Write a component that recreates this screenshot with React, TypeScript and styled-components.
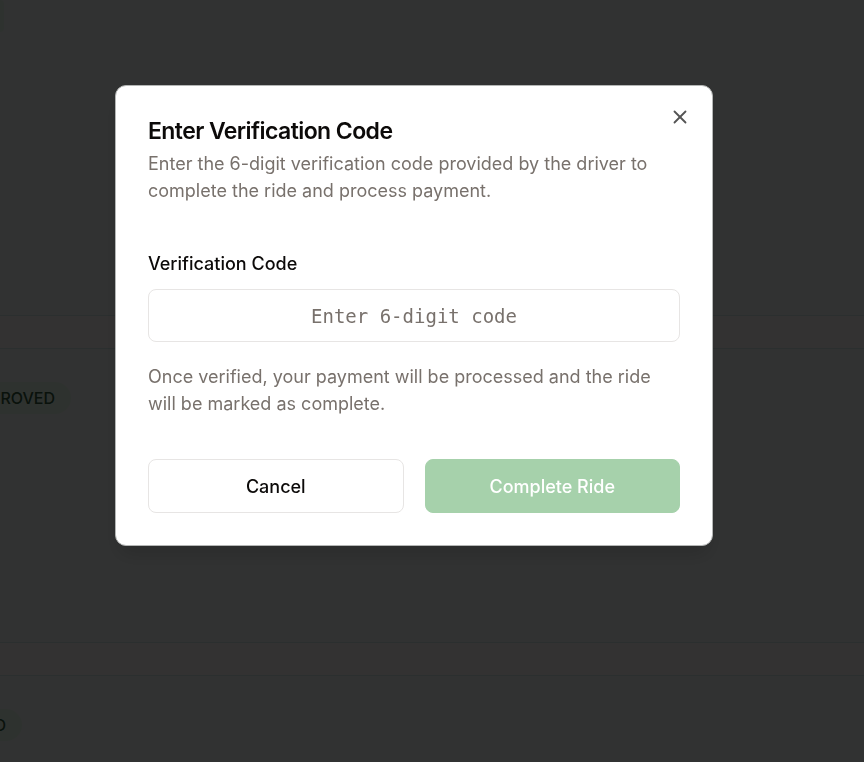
import React from "react";
import styled, { createGlobalStyle } from "styled-components";
import { X } from "lucide-react";

const GlobalStyle = createGlobalStyle`
  * { box-sizing: border-box; }
  body { margin: 0; background: #fffafa; font-family: Inter, "Noto Sans", sans-serif; }
  button, input { font: inherit; }
`;

const Page = styled.div`
  height: 100vh;
  overflow: hidden;
`;

const RideList = styled.main`
  display: flex;
  flex-direction: column;
  gap: 32px;
`;

const RideCard = styled.section<{ $height: number }>`
  flex: none;
  height: ${(p) => p.$height}px;
  padding-top: 33px;
  background: #f5faf7;
  border: solid #d7ebeb;
  border-width: 1px 0;
  &:first-child { padding-top: 0; border-top: 0; }
`;

const Status = styled.span<{ $width: number }>`
  display: flex;
  align-items: center;
  justify-content: flex-end;
  width: ${(p) => p.$width}px;
  height: 32px;
  padding-right: ${(p) => Math.min(16, p.$width)}px;
  overflow: hidden;
  border-radius: 0 16px 16px 0;
  background: #e6f7eb;
  color: #325a3c;
  font-size: 16px;
  font-weight: 500;
`;

const Overlay = styled.div`
  position: fixed;
  inset: 0;
  display: flex;
  align-items: flex-start;
  justify-content: center;
  padding: 85px 36px 0 0;
  background: rgba(0, 0, 0, 0.8);
`;

const Dialog = styled.form`
  position: relative;
  width: 100%;
  max-width: 598px;
  padding: 32px;
  border: 1px solid #b4b6b5;
  border-radius: 11px;
  background: #fff;
  box-shadow: 0 12px 20px -4px rgba(0, 0, 0, 0.15);
`;

const Close = styled.button`
  position: absolute;
  top: 20px;
  right: 21px;
  display: flex;
  padding: 0;
  border: 0;
  background: none;
  color: #545454;
`;

const Title = styled.h2`
  margin: 0 0 5px;
  color: #0c0a09;
  font-size: 23px;
  font-weight: 600;
  line-height: 27px;
  letter-spacing: -0.025em;
`;

const Text = styled.p`
  margin: 0;
  color: #78716c;
  font-size: 18px;
  line-height: 27px;
`;

const Field = styled.div`
  display: flex;
  flex-direction: column;
  gap: 12px;
  margin: 46px 0 21px;
`;

const Label = styled.label`
  color: #0c0a09;
  font-size: 18px;
  font-weight: 500;
  line-height: 27px;
`;

const CodeInput = styled.input`
  width: 100%;
  height: 53px;
  padding: 0 16px;
  border: 1px solid #e7e5e4;
  border-radius: 8px;
  background: #fff;
  font-family: "DejaVu Sans Mono", monospace;
  font-size: 19px;
  text-align: center;
  &::placeholder { color: #78716c; opacity: 1; }
`;

const Actions = styled.div`
  display: grid;
  grid-template-columns: 1fr 1fr;
  gap: 21px;
  margin-top: 42px;
`;

const Button = styled.button<{ $primary?: boolean }>`
  height: 54px;
  padding: 0 16px;
  border: 1px solid ${(p) => (p.$primary ? "#a6d1ab" : "#e7e5e4")};
  border-radius: 8px;
  background: ${(p) => (p.$primary ? "#a6d1ab" : "#fff")};
  color: ${(p) => (p.$primary ? "#fff" : "#0c0a09")};
  font-size: 18px;
  font-weight: 500;
`;

export default function App() {
  return (
    <>
      <GlobalStyle />
      <Page>
        <RideList>
          <RideCard $height={316}>
            <Status $width={4} />
          </RideCard>
          <RideCard $height={295}>
            <Status $width={71}>ROVED</Status>
          </RideCard>
          <RideCard $height={295}>
            <Status $width={22}>D</Status>
          </RideCard>
        </RideList>
      </Page>
      <Overlay>
        <Dialog role="dialog" aria-modal="true" aria-labelledby="dialog-title" onSubmit={(e) => e.preventDefault()}>
          <Title id="dialog-title">Enter Verification Code</Title>
          <Text>
            Enter the 6-digit verification code provided by the driver to complete the ride and process payment.
          </Text>
          <Field>
            <Label htmlFor="code">Verification Code</Label>
            <CodeInput id="code" inputMode="numeric" maxLength={6} placeholder="Enter 6-digit code" />
          </Field>
          <Text>Once verified, your payment will be processed and the ride will be marked as complete.</Text>
          <Actions>
            <Button type="button">Cancel</Button>
            <Button type="submit" $primary disabled>Complete Ride</Button>
          </Actions>
          <Close type="button" aria-label="Close">
            <X size={22} strokeWidth={2} />
          </Close>
        </Dialog>
      </Overlay>
    </>
  );
}
